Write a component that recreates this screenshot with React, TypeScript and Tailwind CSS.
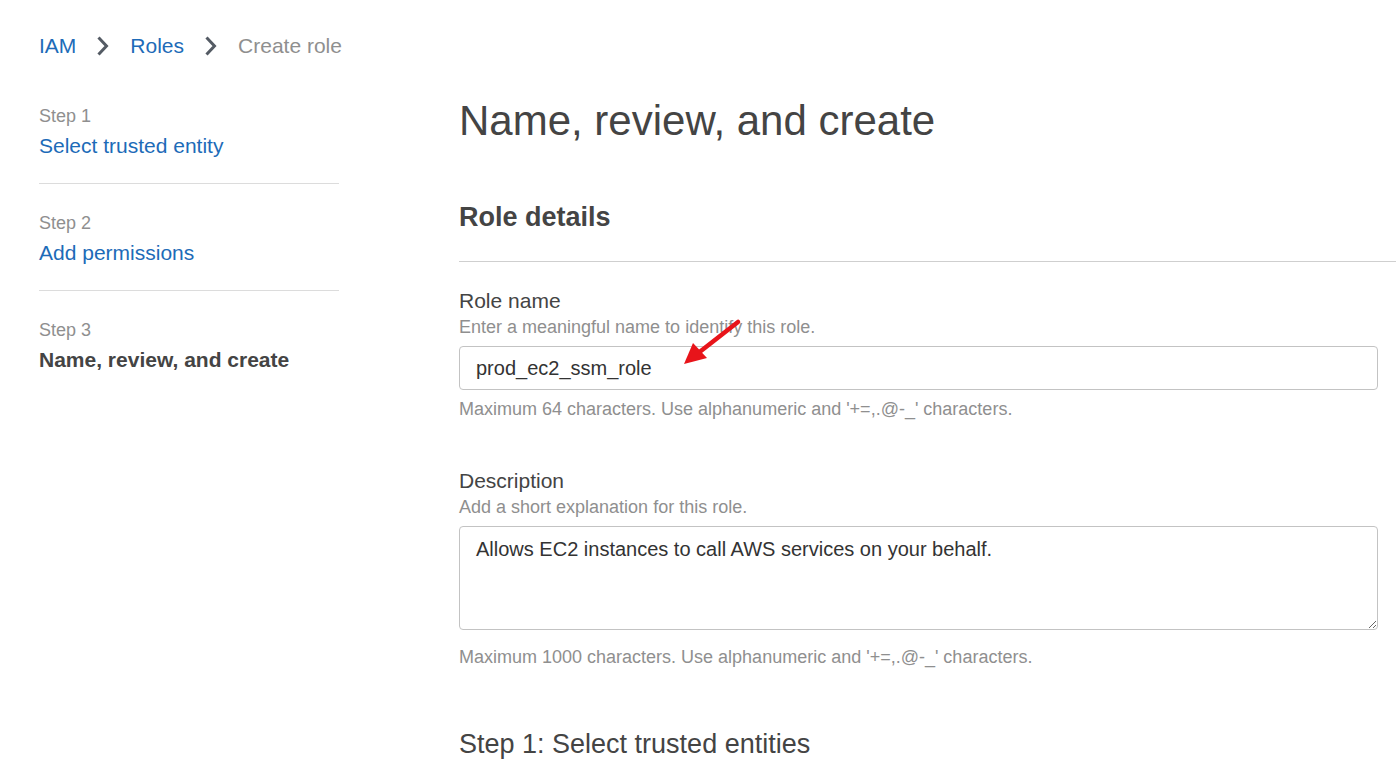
import React from "react";

const font = { fontFamily: '"Liberation Sans", Arial, sans-serif' };

function Chevron() {
  return (
    <svg width="14" height="20" viewBox="0 0 14 20" className="shrink-0">
      <path d="M2.5 1.5 L10.5 10 L2.5 18.5" fill="none" stroke="#545b64" strokeWidth="3" strokeLinecap="butt" strokeLinejoin="miter" />
    </svg>
  );
}

const steps = [
  { step: "Step 1", title: "Select trusted entity", current: false },
  { step: "Step 2", title: "Add permissions", current: false },
  { step: "Step 3", title: "Name, review, and create", current: true },
];

function Field({ label, hint, footer, footerGap, children }: { label: string; hint: string; footer: string; footerGap: string; children: React.ReactNode }) {
  return (
    <div className="mr-[18px]">
      <p className="text-[21px] leading-[26px] text-[#444]">{label}</p>
      <p className="text-[18px] leading-[26px] text-[#8f8f8f]">{hint}</p>
      <div className="mt-[6px]">{children}</div>
      <p className={`${footerGap} text-[18px] leading-[26px] text-[#8f8f8f]`}>{footer}</p>
    </div>
  );
}

export default function App() {
  return (
    <div style={font} className="min-h-screen w-full overflow-hidden bg-white">
      <nav className="flex items-center gap-[20px] pl-[39px] pt-[32px] text-[21px] leading-[28px]">
        <a className="text-[#1d6bb8]">IAM</a>
        <Chevron />
        <a className="text-[#1d6bb8]">Roles</a>
        <Chevron />
        <span className="text-[#8f8f8f]">Create role</span>
      </nav>

      <div className="flex">
        <aside className="ml-[39px] w-[300px] shrink-0 pt-[43px]">
          {steps.map((s, i) => (
            <div key={s.step} className={i < steps.length - 1 ? "mb-[26px] border-b border-[#dcdcdc] pb-[22px]" : ""}>
              <p className="text-[18px] leading-[26px] text-[#8f8f8f]">{s.step}</p>
              <p className={`mt-[2px] text-[21px] leading-[30px] ${s.current ? "font-bold text-[#444]" : "text-[#1d6bb8]"}`}>{s.title}</p>
            </div>
          ))}
        </aside>

        <main className="relative ml-[120px] flex-1">
          <h1 className="pt-[33px] text-[42px] leading-[56px] text-[#444]">Name, review, and create</h1>
          <h2 className="mt-[48px] text-[27px] font-bold leading-[40px] text-[#444]">Role details</h2>
          <div className="mt-[24px] border-t border-[#cfcfcf]" />

          <div className="mt-[26px]">
            <Field label="Role name" hint="Enter a meaningful name to identify this role." footerGap="mt-[6px]" footer="Maximum 64 characters. Use alphanumeric and '+=,.@-_' characters.">
              <input
                readOnly
                value="prod_ec2_ssm_role"
                style={font}
                className="h-[44px] w-full rounded-[4px] border border-[#c3c3c3] px-[16px] text-[20px] text-[#333] outline-none"
              />
            </Field>
          </div>

          <div className="mt-[46px]">
            <Field label="Description" hint="Add a short explanation for this role." footerGap="mt-[14px]" footer="Maximum 1000 characters. Use alphanumeric and '+=,.@-_' characters.">
              <textarea
                readOnly
                value="Allows EC2 instances to call AWS services on your behalf."
                style={font}
                className="block h-[104px] w-full resize-y rounded-[4px] border border-[#c3c3c3] px-[16px] pt-[9px] text-[20px] leading-[26px] text-[#333] outline-none"
              />
            </Field>
          </div>

          <h2 className="mt-[57px] text-[27px] leading-[34px] text-[#444]">Step 1: Select trusted entities</h2>

          <svg className="pointer-events-none absolute left-[220px] top-[256px]" width="64" height="54" viewBox="0 0 64 54">
            <line x1="59" y1="6" x2="18" y2="38" stroke="#e8141a" strokeWidth="4.5" strokeLinecap="round" />
            <polygon points="5,48 14,27 28,42" fill="#e8141a" />
          </svg>
        </main>
      </div>
    </div>
  );
}
